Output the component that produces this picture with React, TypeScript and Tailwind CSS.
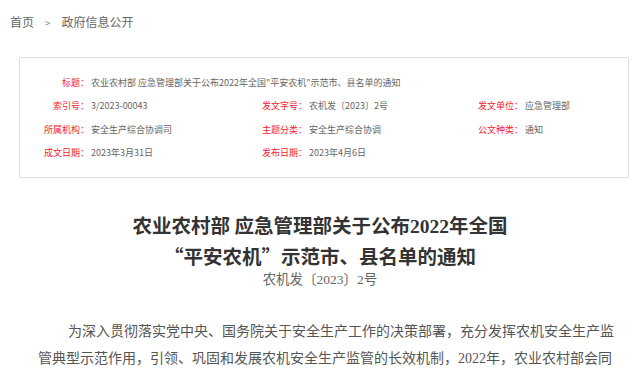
import React from 'react';

const sans = { fontFamily: '"Noto Sans CJK SC", "Liberation Sans", sans-serif' };

const Field: React.FC<{ label: string; value: string }> = ({ label, value }) => (
  <div className="flex items-center whitespace-nowrap">
    <span className="w-[70px] text-right text-[#f5222d] shrink-0">{label}：</span>
    <span className="text-[#666] pl-[2px]">{value}</span>
  </div>
);

const App: React.FC = () => {
  return (
    <div className="w-[640px] h-[375px] overflow-hidden bg-white">
      <div className="flex items-center h-[44px] pl-[10px] text-[12px] text-[#666]" style={sans}>
        <span>首页</span>
        <span className="pl-[11px] pr-[11px] text-[10px] text-[#888]">&gt;</span>
        <span>政府信息公开</span>
      </div>

      <div
        className="ml-[19px] mt-[13px] w-[610px] h-[121px] border border-[#e2e2e2] pt-[13px] text-[9px] leading-[23.3px]"
        style={sans}
      >
        <div className="flex items-center whitespace-nowrap ml-[-1px]">
          <span className="w-[70px] text-right text-[#f5222d] shrink-0">标题：</span>
          <span className="text-[#666] pl-[2px]">农业农村部 应急管理部关于公布2022年全国"平安农机"示范市、县名单的通知</span>
        </div>
        <div className="grid grid-cols-[218px_216px_1fr] ml-[-1px]">
          <Field label="索引号" value="3/2023-00043" />
          <Field label="发文字号" value="农机发〔2023〕2号" />
          <Field label="发文单位" value="应急管理部" />
          <Field label="所属机构" value="安全生产综合协调司" />
          <Field label="主题分类" value="安全生产综合协调" />
          <Field label="公文种类" value="通知" />
          <Field label="成文日期" value="2023年3月31日" />
          <Field label="发布日期" value="2023年4月6日" />
        </div>
      </div>

      <div
        className="mt-[32px] text-center text-[19.5px] leading-[29px] font-semibold text-[#333]"
        style={{ fontFamily: '"Noto Sans CJK SC", "Liberation Serif", serif' }}
      >
        <div>农业农村部 应急管理部关于公布<span style={{ fontFamily: '"Liberation Serif", serif' }}>2022</span>年全国</div>
        <div>“平安农机”示范市、县名单的通知</div>
      </div>
      <div
        className="text-center text-[13.5px] leading-[22px] text-[#666] mt-[-1px]"
        style={{ fontFamily: '"Liberation Serif", "Noto Sans CJK SC", serif' }}
      >
        农机发〔2023〕2号
      </div>

      <p
        className="mt-[27px] ml-[38px] w-[579px] text-[14px] leading-[27px] text-[#555] indent-[30px]"
        style={{ fontFamily: '"Liberation Serif", "Noto Sans CJK SC", serif' }}
      >
        为深入贯彻落实党中央、国务院关于安全生产工作的决策部署，充分发挥农机安全生产监管典型示范作用，引领、巩固和发展农机安全生产监管的长效机制，2022年，农业农村部会同应急管理部组织开展了全国“平安农机”示范创建活动。
      </p>
    </div>
  );
};

export default App;
